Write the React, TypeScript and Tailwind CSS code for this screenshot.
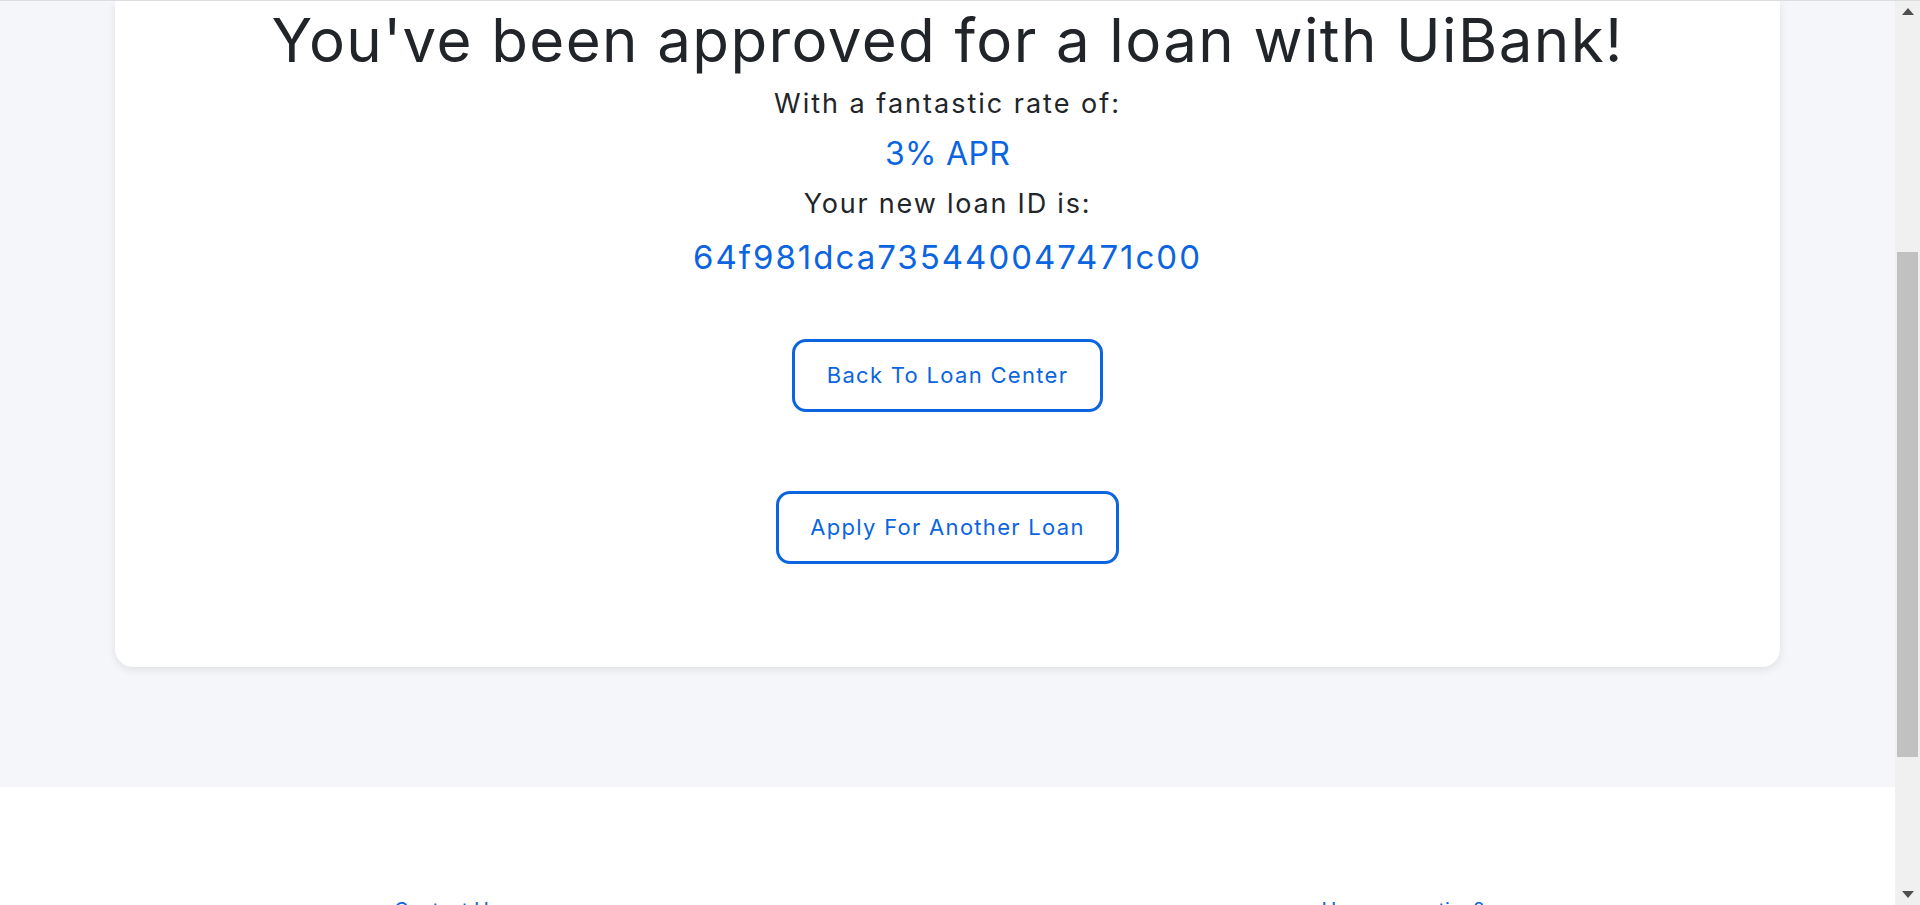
import React from "react";

export default function App() {
  const font = { fontFamily: "Inter, 'Noto Sans', sans-serif" };
  return (
    <div className="flex h-[905px] w-[1920px] overflow-hidden border-t border-[#dcdde0] bg-white" style={font}>
      <div className="flex flex-1 flex-col">
        <section className="bg-[#f5f6fa] px-[115px] pb-[120px]">
          <div className="flex flex-col items-center rounded-b-[18px] bg-white pb-[103px] pt-[1px] shadow-[0_3px_8px_rgba(0,0,0,0.09)]">
            <h1 className="text-[60px] leading-[76px] font-normal tracking-[1.4px] text-[#212529]">
              You've been approved for a loan with UiBank!
            </h1>
            <p className="mt-[1px] text-[27px] leading-[50px] tracking-[2px] text-[#212529]">With a fantastic rate of:</p>
            <p className="text-[32px] leading-[50px] tracking-[0.3px] text-[#0b65e0]">3% APR</p>
            <p className="text-[27px] leading-[50px] tracking-[1.8px] text-[#212529]">Your new loan ID is:</p>
            <p className="text-[33px] leading-[56px] tracking-[2px] text-[#0b65e0]">64f981dca735440047471c00</p>
            <button className="mt-[54px] flex h-[73px] w-[311px] items-center justify-center rounded-[14px] border-[3px] border-[#0b65e0] bg-white text-[22px] tracking-[1.3px] text-[#0b65e0]">
              Back To Loan Center
            </button>
            <button className="mt-[79px] flex h-[73px] w-[343px] items-center justify-center rounded-[14px] border-[3px] border-[#0b65e0] bg-white text-[22px] tracking-[1.3px] text-[#0b65e0]">
              Apply For Another Loan
            </button>
          </div>
        </section>
        <footer className="flex flex-1 bg-white pt-[111px]">
          <div className="flex w-full justify-between pl-[394px] pr-[411px] text-[20px] leading-[24px] text-[#0b65e0]">
            <span>Contact Us</span>
            <span>Have a question?</span>
          </div>
        </footer>
      </div>
      <div className="flex w-[25px] flex-col items-center bg-[#f0f0f0]">
        <div className="flex h-[20px] items-center justify-center">
          <svg width="12" height="7" viewBox="0 0 12 7"><path d="M6 0 L12 7 L0 7 Z" fill="#505050" /></svg>
        </div>
        <div className="mt-[231px] h-[505px] w-[21px] bg-[#c1c1c1]" />
        <div className="flex-1" />
        <div className="flex h-[22px] items-center justify-center">
          <svg width="12" height="7" viewBox="0 0 12 7"><path d="M0 0 L12 0 L6 7 Z" fill="#505050" /></svg>
        </div>
      </div>
    </div>
  );
}
